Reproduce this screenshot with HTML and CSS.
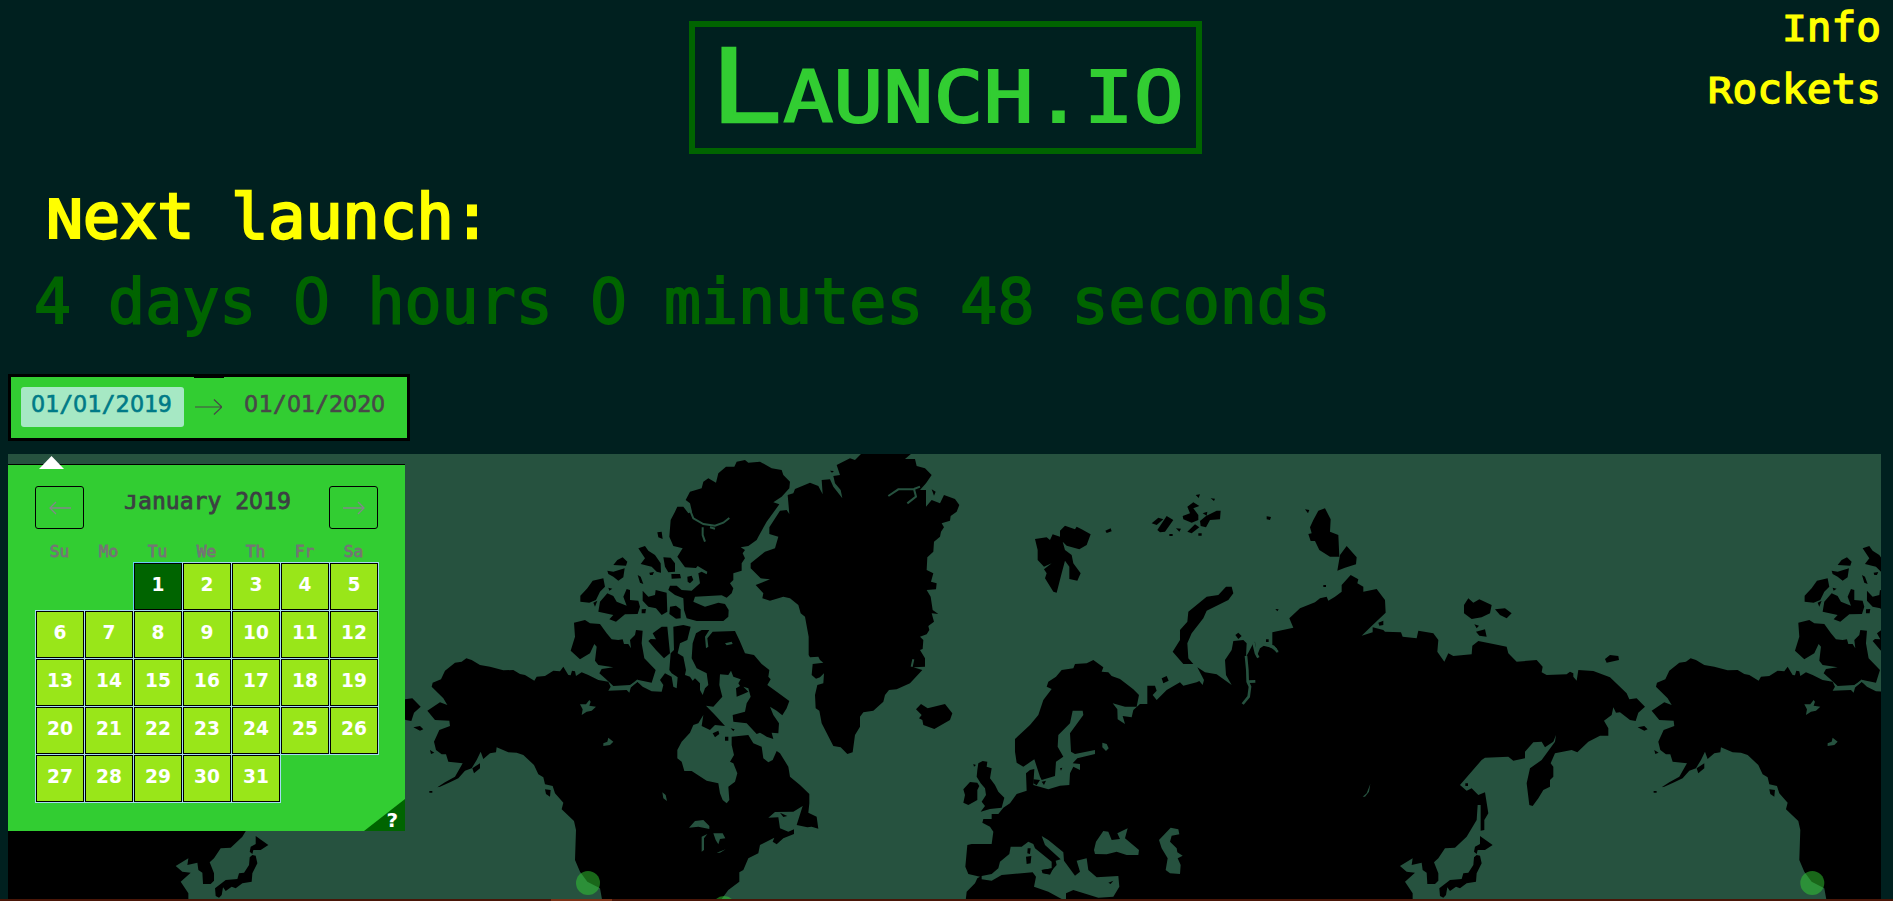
FILE: index.html
```html
<!DOCTYPE html>
<html lang="en">
<head>
<meta charset="utf-8">
<title>Launch.io</title>
<link rel="stylesheet" href="styles.css">
</head>
<body>
<header class="header">
  <h1 class="logo"><span class="logo-text"><span class="logo-initial">L</span><span class="logo-rest">AUNCH.IO</span></span></h1>
  <nav class="nav">
    <a class="nav-link"><span class="cap">I</span>nfo</a>
    <a class="nav-link"><span class="cap">R</span>ockets</a>
  </nav>
</header>
<section class="countdown">
  <h2 class="countdown-title"><span class="cap">N</span>ext launch:</h2>
  <p class="countdown-time">4 days <span class="num">0</span> hours <span class="num">0</span> minutes 48 seconds</p>
</section>
<section class="picker">
  <span class="date date-start"><span class="num">0</span>1/<span class="num">0</span>1/2<span class="num">0</span>19</span>
  <svg class="arrow" viewBox="0 0 28 16"><path d="M0 8H27M19 .5L27 8L19 15.5"/></svg>
  <span class="date"><span class="num">0</span>1/<span class="num">0</span>1/2<span class="num">0</span>2<span class="num">0</span></span>
  <i class="nub"></i>
</section>
<main class="map-wrap">
  <svg class="map" viewBox="8 454 1873 445" preserveAspectRatio="none">
    <defs>
      <g id="world">
        <g transform="translate(400 440) scale(.33333)">
          <path d="M199 655L215 660 240 675 270 680 310 691 340 690 360 702 375 705 403 722 410 710 435 708 460 692 480 694 490 680 505 705 512 706 516 692 525 694 528 708 545 697 565 705 595 720 625 725 632 740 625 752 680 750 688 758 693 740 712 725 728 740 755 754 785 755 790 735 780 720 795 700 815 710 820 740 830 745 833 712 815 700 808 690 812 640 822 630 820 560 850 555 872 560 862 600 840 610 833 640 850 650 858 690 855 705 870 710 878 722 885 715 900 730 900 750 908 765 915 745 925 735 920 700 890 685 875 655 878 610 888 580 905 570 928 570 915 590 918 625 925 620 922 595 938 575 1005 573 1018 600 1035 640 1062 645 1085 672 1108 690 1105 710 1112 718 1102 735 1130 755 1168 783 1160 805 1147 826 1130 812 1110 800 1120 825 1137 850 1135 880 1115 878 1120 897 1100 890 1080 878 1070 882 1040 850 1000 845 998 825 1035 815 1040 790 1052 770 1045 745 1030 740 1045 755 1030 762 1010 770 1008 745 1020 738 1015 730 1022 718 1000 710 993 692 985 705 960 703 958 735 967 770 940 800 918 797 945 825 975 858 945 855 930 870 905 858 910 825 895 850 880 855 870 878 845 905 832 930 832 955 845 965 853 993 875 993 920 1022 955 1030 960 1060 968 1080 980 1090 988 1080 985 1040 1005 1025 1012 1000 1000 970 990 965 1002 945 995 915 995 890 1045 885 1060 910 1085 920 1090 955 1105 967 1118 960 1130 933 1140 940 1165 980 1170 1010 1200 1035 1228 1062 1228 1090 1225 1118 1250 1130 1255 1166 1235 1160 1222 1162 1190 1155 1208 1098 1180 1115 1125 1116 1105 1133 1135 1132 1140 1165 1165 1175 1182 1168 1182 1182 1150 1195 1130 1213 1118 1205 1123 1193 1080 1215 1075 1240 1045 1255 1030 1290 1018 1297 1018 1325 985 1350 965 1377 965 1400 610 1400 600 1345 562 1325 540 1295 525 1260 528 1170 522 1143 485 1108 490 1088 465 1060 458 1038 435 1033 430 1012 415 1003 402 975 370 945 350 938 325 937 290 922 288 937 270 940 250 957 242 935 230 960 215 985 195 992 175 1015 150 1027 120 1040 112 1042 135 1027 165 1010 188 970 145 965 138 943 125 943 108 930 102 905 118 870 150 858 148 842 105 840 82 812 120 787 142 795 130 775 95 740 98 728 123 718 135 692 165 668 185 665Z"/>
          <path d="M522 548L555 540 570 550 600 552 620 580 635 598 655 600 668 598 672 612 685 612 693 625 690 600 705 585 708 570 728 572 725 610 733 655 767 690 755 728 715 720 690 735 640 738 615 715 598 700 605 687 640 682 595 675 585 662 590 620 583 612 570 640 540 658 512 632 525 590Z"/>
          <path d="M1010 65L1035 60 1045 68 1080 65 1115 85 1145 90 1150 105 1170 125 1168 145 1145 170 1120 187 1138 193 1100 245 1075 290 1070 300 1045 318 1022 322 1035 330 1028 340 1035 355 1025 370 1025 392 1000 400 1000 420 990 430 1000 445 995 460 980 473 965 466 885 470 880 485 915 500 955 488 975 492 986 510 985 530 970 543 890 543 860 535 852 510 850 475 825 465 805 450 810 437 830 437 845 450 875 452 900 430 895 400 905 395 920 403 922 395 893 378 888 384 855 382 832 350 848 325 820 318 808 290 812 240 825 215 832 200 850 200 865 220 876 215 870 190 857 180 870 155 905 145 910 125 925 115 948 128 955 100 978 80 1003 80Z"/>
          <path d="M715 325L735 318 745 332 765 345 782 370 783 398 770 395 755 380 722 372 735 355ZM790 352L812 353 825 370 825 395 805 397 795 380ZM640 375L652 360 668 352 682 365 678 377ZM622 392L640 395 674 385 670 412 655 422 640 410 625 402ZM541 467L562 445 578 422 610 415 615 440 600 455 588 480 568 488 541 485ZM580 488L592 482 585 500ZM595 515L600 485 622 460 640 468 650 485 680 497 670 470 680 447 690 450 690 480 715 482 720 500 713 522 675 523 648 545 628 538 640 525ZM728 452L745 470 765 465 767 450 800 458 802 515 785 525 768 505 745 500 728 482ZM810 500L828 497 842 508 842 535 828 536 808 522ZM814 402L840 402 843 415 815 416ZM862 410L875 407 880 420 870 430 863 425ZM713 405L722 410 730 432 720 428ZM748 398L762 396 758 405 750 405ZM772 277L785 275 788 297 775 292ZM725 508L738 507 736 520 725 520ZM625 443L637 446 628 452ZM758 580L785 560 802 560 805 590 810 640 792 655 768 630 745 603 752 597 768 598ZM217 985L240 970 240 985 222 1000ZM435 1048L452 1050 450 1070 438 1062ZM40 862L60 858 70 868 60 872ZM90 930L103 938 93 942ZM88 1053H97V1058H88ZM938 880L955 872 958 882 945 892ZM975 890H985V902H975ZM992 865L1004 868 1000 874ZM1140 1118L1162 1128 1150 1131Z"/>
          <path class="sea" d="M540 793L558 793 568 780 572 785 568 797 588 800 575 812 560 815 545 825 548 808ZM610 910L622 905 625 893 640 905 630 915 610 918ZM787 1057L797 1065 801 1083 790 1075ZM867 1163L885 1143 910 1140 928 1158 928 1167 895 1160ZM905 1235L905 1190 922 1182 912 1195 912 1230ZM940 1180L968 1180 976 1195 960 1197 955 1213 947 1200ZM950 1238L977 1228 960 1238ZM975 610L995 605 998 612 980 616Z"/>
          <path class="fjord" d="M868 205L880 235 910 252 945 257 970 248 988 234M908 262L908 285 915 305M930 262L945 266"/>
          <path class="fjord" d="M636 744L690 740 712 722 732 734"/>
        </g>
        <g transform="translate(740 440) scale(.33333)">
          <path d="M290 75L330 55 345 60 365 40 515 40 495 57 525 57 530 78 555 85 575 105 558 130 540 150 558 150 558 200 575 180 600 190 612 165 645 177 658 195 650 215 632 228 630 242 605 250 612 262 603 275 600 290 582 305 580 335 562 352 560 390 580 400 573 425 590 430 588 448 560 450 572 470 578 510 595 522 575 520 582 545 565 558 568 570 560 583 540 590 550 600 548 627 540 630 555 655 555 680 520 682 547 690 510 730 470 748 447 750 435 765 430 785 400 812 370 817 360 830 360 860 345 885 338 937 322 942 302 922 280 918 245 850 238 812 227 805 225 765 232 735 250 730 252 700 240 712 228 716 215 705 218 672 250 668 240 660 235 650 210 652 206 645 206 590 195 530 182 520 175 495 150 475 130 470 90 482 67 475 70 460 47 435 90 418 62 415 32 385 32 370 75 335 105 325 115 290 88 282 88 262 120 212 140 210 148 222 143 165 160 160 165 147 210 128 235 138 248 163 245 120 270 118 280 140 307 175 302 150 285 130 280 108 300 105Z"/>
          <path class="fjord" d="M445 168L475 148 522 147 528 170 502 190M522 147L540 140M515 680L520 658"/>
          <path d="M885 297L920 292 930 300 938 283 960 290 960 272 975 257 1005 268 1010 260 1025 268 1052 283 1040 315 1018 328 980 317 968 305 975 330 995 345 1000 370 1022 400 1012 422 988 417 988 380 975 362 965 400 950 458 940 455 915 415 920 400 912 388 935 370 912 380 893 360 893 330ZM1096 272L1112 265 1115 274 1100 279ZM528 808L543 792 563 805 615 792 637 820 630 840 583 867 550 855 547 840 537 835 545 825ZM715 970L728 963 742 965 740 980 755 985 750 1015 765 1035 775 1055 793 1073 785 1103 750 1107 722 1115 735 1098 725 1085 738 1065 735 1045 722 1030 710 1010 712 990ZM670 1048L690 1026 712 1028 718 1038 712 1050 712 1080 685 1095 670 1088 675 1065ZM700 972L708 975 702 980ZM575 148L587 155 582 167ZM270 92L282 93 276 98Z"/>
          <path d="M948 710L965 690 1000 685 1005 672 1040 670 1060 660 1090 682 1085 695 1105 697 1115 708 1140 717 1180 748 1197 765 1190 800 1155 800 1118 790 1132 808 1133 838 1155 852 1148 828 1175 832 1180 810 1200 792 1222 792 1222 737 1245 737 1250 752 1238 765 1250 780 1265 765 1280 750 1320 727 1330 737 1370 727 1378 723 1388 735 1392 720 1372 682 1395 697 1430 703 1475 735 1458 705 1455 660 1475 630 1480 603 1510 600 1520 610 1518 650 1525 638 1540 610 1545 605 1550 650 1560 625 1575 615 1595 625 1615 638 1610 625 1597 615 1597 577 1660 563 1648 535 1680 505 1725 487 1740 475 1760 470 1765 482 1785 470 1805 455 1805 435 1832 405 1855 418 1852 430 1870 440 1870 455 1910 447 1935 480 1937 518 1895 558 1865 587 1898 577 1898 562 1930 570 1935 575 1983 577 1988 590 2030 595 2035 572 2080 580 2095 600 2092 635 2113 665 2125 640 2140 648 2195 643 2197 617 2215 603 2260 612 2300 620 2305 640 2330 665 2390 660 2408 680 2405 697 2420 705 2480 703 2490 695 2500 700 2500 710 2510 722 2515 690 2560 693 2610 712 2660 760 2668 778 2690 775 2715 800 2695 818 2687 843 2670 840 2640 817 2628 818 2620 802 2615 825 2592 842 2605 865 2605 887 2580 887 2545 905 2512 937 2495 930 2445 940 2432 970 2440 980 2440 1010 2430 1020 2430 1040 2410 1050 2395 1075 2378 1098 2368 1095 2360 1030 2370 985 2405 960 2445 905 2448 885 2440 905 2415 922 2405 905 2380 907 2355 935 2355 955 2320 962 2305 950 2235 953 2225 960 2160 1035 2180 1052 2195 1045 2215 1065 2235 1057 2245 1120 2233 1140 2233 1170 2222 1172 2222 1095 2213 1095 2210 1140 2180 1190 2145 1223 2115 1225 2095 1255 2082 1267 2095 1300 2095 1322 2085 1332 2062 1332 2060 1298 2048 1290 2045 1268 2015 1275 2018 1255 1980 1278 2000 1295 2025 1298 1995 1325 2018 1360 2018 1400 675 1400 680 1355 705 1330 712 1315 720 1310 685 1302 676 1280 682 1215 695 1212 755 1212 760 1175 750 1160 727 1148 730 1137 755 1137 755 1122 775 1122 790 1103 810 1090 830 1062 860 1052 858 1000 870 990 883 987 880 1035 925 1048 960 1037 988 1035 990 1000 1000 980 1020 990 1020 972 998 970 1012 955 1065 942 1065 930 1005 942 993 935 990 880 1030 825 1028 812 998 812 990 850 955 885 953 920 970 950 948 965 945 1008 905 1020 900 1010 883 958 850 980 830 968 825 935 825 897 870 855 895 825 910 780 935 747 920 740 925 725Z"/>
          <path class="sea" d="M725 1308L755 1302 775 1285 780 1265 808 1242 812 1220 845 1220 865 1205 880 1212 885 1225 935 1265 935 1285 905 1290 908 1300 925 1303 950 1275 947 1262 962 1258 915 1215 905 1188 925 1200 970 1237 972 1262 1005 1307 1020 1295 1010 1262 1040 1255 1045 1290 1070 1312 1135 1308 1138 1340 1120 1370 1075 1373 1000 1350 978 1360 978 1400 965 1377 925 1355 882 1340 888 1310 878 1297 785 1305 755 1322 725 1318ZM1062 1230L1068 1205 1090 1173 1105 1175 1115 1200 1140 1197 1132 1180 1163 1165 1155 1195 1197 1230 1195 1245 1160 1245 1130 1235 1100 1243 1065 1242ZM1087 908L1100 912 1106 925 1098 933 1087 922Z"/>
          <path d="M863 1225L872 1225 870 1242 862 1240ZM858 1250L874 1248 872 1270 860 1272ZM905 1290L940 1285 930 1304 908 1298ZM1105 1328L1120 1322 1112 1332ZM880 1018L900 1020 890 1036 880 1030ZM905 1025L918 1022 912 1035ZM960 985L967 983 963 992Z"/>
        </g>
        <g transform="translate(1100 440) scale(.33333)">
          <path class="sea" d="M177 1200L212 1163 235 1168 238 1183 215 1187 210 1205 230 1225 232 1237 248 1247 233 1255 242 1275 240 1302 210 1300 197 1290 203 1255 185 1225ZM788 1070L800 1060 811 1032 807 1055 795 1070Z"/>
          <path class="river" d="M438 648L442 690 443 725 450 740 446 770 428 792M460 606L468 640 475 653M445 725L466 724M484 612L520 620 533 636"/>
          <path d="M218 635L240 600 240 570 262 545 265 515 320 470 355 465 378 440 395 440 400 460 385 480 320 512 310 535 275 580 262 610 265 655 280 672 250 672ZM640 240L655 212 675 205 692 238 690 275 715 285 718 350 690 350 658 330 645 303 632 303 625 282 635 280 630 262ZM712 392L720 345 740 318 770 352 768 373 735 383ZM155 250L175 233 190 238 170 255ZM172 270L200 228 220 240 195 275 180 277ZM248 228L270 220 262 200 280 187 298 198 280 205 295 225 295 240 275 248 250 238ZM262 275L285 253 298 262 275 280ZM300 243L318 228 350 212 362 212 360 238 330 240 318 262 302 258ZM287 165L300 163 296 174ZM332 175L345 176 342 183ZM308 220L322 215 320 227ZM228 265L243 266 238 275ZM208 282H218V288H208ZM295 280H305V287H295ZM500 229L513 231 510 240 500 238ZM615 208L628 210 624 220ZM185 715L200 708 206 722 190 730ZM406 585L415 578 425 588 415 597ZM526 507L536 508 532 514ZM498 598H506V606H498ZM670 435H678V441H670ZM835 548L850 542 850 555 838 557ZM1092 495L1105 475 1120 488 1138 478 1175 495 1170 520 1145 532 1115 537 1092 520ZM1185 508L1215 505 1235 520 1220 535 1200 525ZM1123 553L1137 557 1130 565ZM1128 575L1155 568 1160 590 1138 587ZM1515 657L1530 645 1555 648 1557 660 1520 668ZM1140 1188L1178 1215 1155 1230 1133 1230 1130 1242 1122 1235 1125 1220 1140 1212ZM1130 1245L1140 1247 1145 1270 1130 1300 1128 1325 1100 1330 1080 1345 1068 1340 1050 1353 1042 1342 1038 1365 1030 1373 1020 1368 1018 1345 1050 1320 1085 1317 1090 1300 1105 1298 1120 1275 1122 1252ZM1096 1030H1104V1038H1096Z"/>
        </g>
        <circle class="site" cx="588" cy="883" r="12"/>
        <circle class="site" cx="724" cy="908" r="12"/>
      </g>
    </defs>
    <use href="#world" x="-1224.3"/>
    <use href="#world"/>
    <use href="#world" x="1224.3"/>
  </svg>
  <div class="calendar">
    <svg class="pointer" viewBox="0 0 25 13"><path d="M0 13L12.5 0L25 13Z"/></svg>
    <div class="cal-head">
      <button class="cal-btn"><svg viewBox="0 0 22 14"><path d="M22 7H1M7 1L1 7L7 13"/></svg></button>
      <div class="cal-title"><span class="cap">J</span>anuary 2<span class="num">0</span>19</div>
      <button class="cal-btn"><svg viewBox="0 0 22 14"><path d="M0 7H21M15 1L21 7L15 13"/></svg></button>
    </div>
    <div class="week"><span>Su</span><span>Mo</span><span>Tu</span><span>We</span><span>Th</span><span>Fr</span><span>Sa</span></div>
    <div class="days">
      <span class="day first selected">1</span><span class="day">2</span><span class="day">3</span><span class="day">4</span><span class="day">5</span>
      <span class="day">6</span><span class="day">7</span><span class="day">8</span><span class="day">9</span><span class="day">10</span><span class="day">11</span><span class="day">12</span>
      <span class="day">13</span><span class="day">14</span><span class="day">15</span><span class="day">16</span><span class="day">17</span><span class="day">18</span><span class="day">19</span>
      <span class="day">20</span><span class="day">21</span><span class="day">22</span><span class="day">23</span><span class="day">24</span><span class="day">25</span><span class="day">26</span>
      <span class="day">27</span><span class="day">28</span><span class="day">29</span><span class="day">30</span><span class="day">31</span>
    </div>
    <div class="help">?</div>
  </div>
</main>
<footer class="strip"><i class="strip-mark"></i></footer>
</body>
</html>
```
FILE: styles.css
```css
* { box-sizing: border-box; }
body {
  margin: 0;
  height: 901px;
  overflow: hidden;
  background: #00201f;
  font-family: "DejaVu Sans Mono", monospace;
}
h1, h2, p { margin: 0; font-weight: 400; }

/* capitals sit lower than the ascenders */
.cap {
  display: inline-block;
  line-height: 1;
  transform: scaleY(.87);
  transform-origin: 0 .846em;
}
/* plain zero, narrowed to the monospace cell */
.num {
  display: inline-block;
  width: .602em;
  line-height: 1;
  font-family: "DejaVu Sans", sans-serif;
  text-indent: -.017em;
  transform: scaleX(.95);
}

.header {
  display: grid;
  grid-template-columns: 1fr 513px 1fr;
  height: 154px;
  padding: 21px 12px 0 9px;
}
.logo {
  grid-column: 2;
  height: 133px;
  border: 6px solid #006400;
  color: #32cd32;
  padding-left: 16px;
  white-space: nowrap;
}
.logo-text {
  display: block;
  line-height: 121px;
  margin-top: -6px;
  transform: scaleY(.86);
  transform-origin: 0 101px;
}
.logo-initial { font-size: 119px; letter-spacing: 1px; -webkit-text-stroke: 3px #32cd32; }
.logo-rest { font-size: 83.2px; -webkit-text-stroke: 2.2px #32cd32; }

.nav {
  grid-column: 3;
  display: flex;
  flex-direction: column;
  align-items: flex-end;
  margin-top: -25px;
}
.nav-link {
  color: #ff0;
  font-size: 41.1px;
  line-height: 62px;
  -webkit-text-stroke: 1.4px #ff0;
}

.countdown { height: 220px; padding: 32px 0 0 34px; font-size: 61.55px; white-space: nowrap; }
.countdown-title {
  font-size: inherit;
  line-height: 62px;
  padding-left: 12px;
  color: #ff0;
  -webkit-text-stroke: 2.4px #ff0;
}
.countdown-time { margin-top: 22px; line-height: 62px; color: #006400; -webkit-text-stroke: 1.8px #006400; }

.picker {
  position: relative;
  display: flex;
  align-items: flex-start;
  width: 402px;
  height: 67px;
  margin-left: 8px;
  padding: 10px;
  border: 3px solid #000;
  background: #32cd32;
}
.date {
  height: 40px;
  padding-left: 10px;
  width: 163px;
  font-size: 23.4px;
  line-height: 35px;
  color: #484848;
  white-space: nowrap;
  -webkit-text-stroke: .6px currentColor;
}
.date-start { border-radius: 3px; background: #a6e8c4; color: #007a87; }
.arrow { width: 28px; height: 16px; margin: 12px 12px 0 11px; fill: none; stroke: #484848; stroke-width: 1.2; }
.nub { position: absolute; left: 183px; top: -3px; width: 30px; height: 4px; background: #000; }

.map-wrap { position: relative; width: 1873px; height: 445px; margin: 13px 0 0 8px; }
.map { display: block; width: 1873px; height: 445px; background: #26523f; }
.sea { fill: #26523f; }
.fjord, .river { fill: none; stroke: #26523f; stroke-width: 6; }
.river { stroke-width: 8; }
.site { fill: #32cd32; fill-opacity: .5; }

.calendar {
  position: absolute;
  left: 0;
  top: 10px;
  width: 397px;
  height: 367px;
  padding: 21px 27px 0 27px;
  border-top: 1px solid #000;
  background: #32cd32;
}
.pointer { position: absolute; left: 31px; top: -9px; width: 25px; height: 13px; fill: #fff; }
.cal-head { display: flex; justify-content: space-between; height: 43px; }
.cal-btn {
  display: flex;
  align-items: center;
  justify-content: center;
  width: 49px;
  height: 43px;
  padding: 0;
  border: 1px solid #000;
  border-radius: 3px;
  background: none;
}
.cal-btn svg { width: 22px; height: 14px; fill: none; stroke: #82888a; stroke-width: 1.3; }
.cal-title { padding-left: 2px; font-size: 23.1px; line-height: 31px; color: #3c4043; -webkit-text-stroke: .8px currentColor; }
.week {
  display: grid;
  grid-template-columns: repeat(7, 49px);
  height: 33px;
  padding-top: 13px;
  font-size: 16.3px;
  line-height: 20px;
  text-align: center;
  color: #757575;
  -webkit-text-stroke: .8px currentColor;
}
.days {
  display: grid;
  grid-template-columns: repeat(7, 48px);
  grid-auto-rows: 47px;
  gap: 1px;
  margin: 1px 0 0 1px;
}
.day {
  border: 1px solid #000;
  outline: 1px solid #a5dcf2;
  background: #99e619;
  color: #fff;
  font: 700 18.6px/41px "DejaVu Sans", sans-serif;
  text-align: center;
}
.first { grid-column: 3; }
.selected { background: #006400; outline-color: #66d0f5; }
.help {
  position: absolute;
  right: 0;
  bottom: 0;
  width: 41px;
  height: 32px;
  padding: 10px 7px 0 0;
  clip-path: polygon(0 100%, 100% 0, 100% 100%);
  background: #006400;
  color: #fff;
  font: 700 20px/22px "DejaVu Sans", sans-serif;
  text-align: right;
}
.strip { height: 2px; background: #4a1608; }
.strip-mark { display: block; width: 61px; height: 2px; margin-left: 551px; background: #7c3217; }
```
